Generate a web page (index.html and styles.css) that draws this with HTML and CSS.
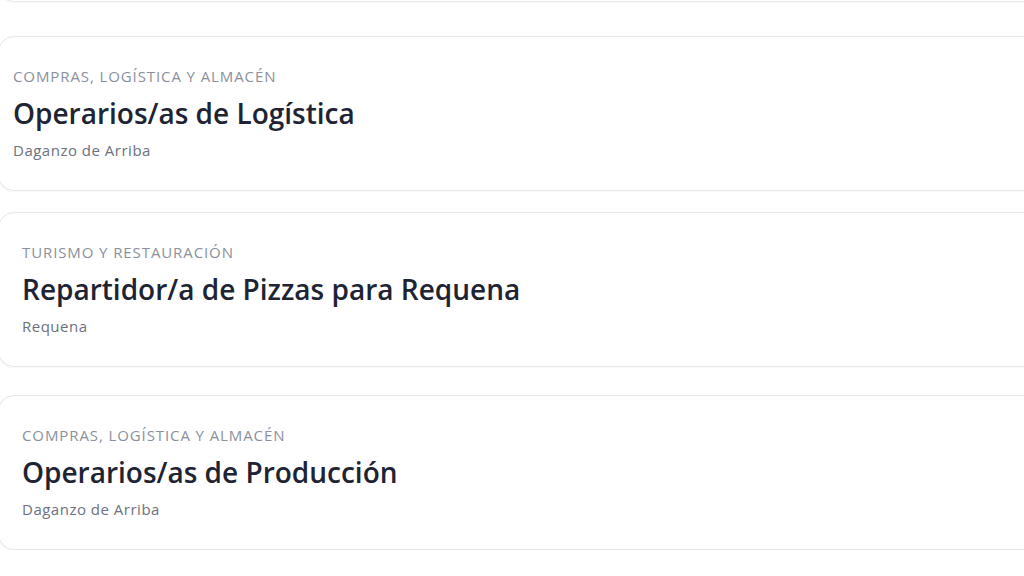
FILE: index.html
```html
<!DOCTYPE html>
<html lang="es">
<head>
  <meta charset="UTF-8" />
  <meta name="viewport" content="width=device-width, initial-scale=1.0"/>
  <title>Ofertas de empleo</title>
  <link rel="stylesheet" href="styles.css">
</head>
<body>
  <!-- Job offers list -->
  <main class="offers">
    <div class="card card-prev"></div>

    <a class="card card-first" href="#">
      <p class="card-area">Compras, Logística y Almacén</p>
      <h2 class="card-title">Operarios/as de Logística</h2>
      <p class="card-place">Daganzo de Arriba</p>
    </a>

    <a class="card card-second" href="#">
      <p class="card-area">Turismo y Restauración</p>
      <h2 class="card-title">Repartidor/a de Pizzas para Requena</h2>
      <p class="card-place">Requena</p>
    </a>

    <a class="card card-third" href="#">
      <p class="card-area">Compras, Logística y Almacén</p>
      <h2 class="card-title">Operarios/as de Producción</h2>
      <p class="card-place">Daganzo de Arriba</p>
    </a>
  </main>
</body>
</html>
```

FILE: styles.css
```css
body {
  font-family: "Open Sans", Arial, sans-serif;
  margin: 0;
  background-color: #ffffff;
  overflow: hidden;
}

.offers {
  display: flex;
  flex-direction: column;
  margin-top: -153px;
  margin-left: -2px;
  margin-right: -40px;
}

.card {
  display: block;
  box-sizing: border-box;
  height: 155px;
  padding: 29px 0 0 14px;
  border: 1px solid #e6e7ea;
  border-radius: 16px;
  background-color: #ffffff;
  box-shadow: 0 1px 2px rgba(0,0,0,0.04);
  text-decoration: none;
}

.card-first {
  margin-top: 34px;
}

.card-second {
  margin-top: 21px;
  padding-left: 23px;
}

.card-third {
  margin-top: 28px;
  padding-left: 23px;
}

.card-area {
  margin: 0;
  font-size: 15px;
  line-height: 20px;
  letter-spacing: 0.9px;
  text-transform: uppercase;
  color: #8a909c;
}

.card-title {
  margin: 10px 0 0;
  font-size: 28px;
  line-height: 34px;
  font-weight: 600;
  color: #1e2433;
}

.card-place {
  margin: 10px 0 0;
  font-size: 15px;
  line-height: 20px;
  letter-spacing: 0.5px;
  color: #6b7180;
}
```
